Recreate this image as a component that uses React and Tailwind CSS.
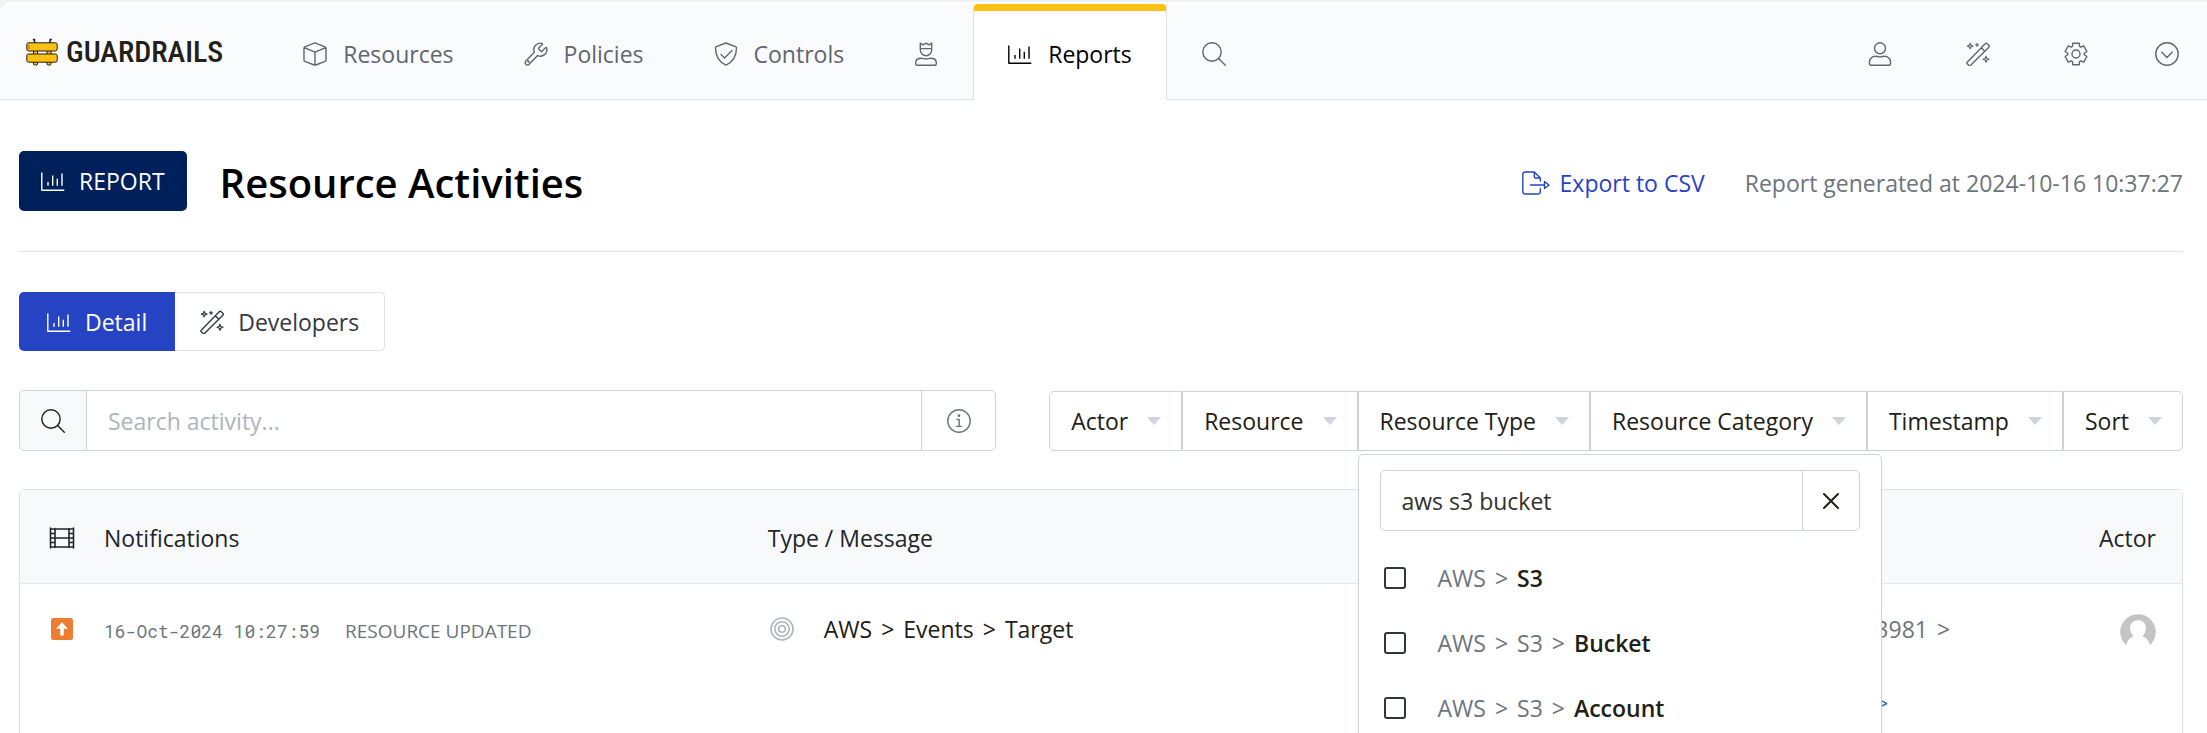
import { Wrench } from "lucide-react";

function Icon({ children, width = 24, className = "", strokeWidth = 1.4 }) {
  return (
    <svg
      width={width}
      height="24"
      viewBox={`0 0 ${width} 24`}
      fill="none"
      stroke="currentColor"
      strokeWidth={strokeWidth}
      strokeLinecap="round"
      strokeLinejoin="round"
      className={`shrink-0 ${className}`}
      aria-hidden="true"
    >
      {children}
    </svg>
  );
}

const CubeIcon = () => (
  <Icon>
    <path d="M11.2 1.1 1.9 4.8A1.4 1.4 0 0 0 1 6v12a1.4 1.4 0 0 0 .9 1.3l9.3 3.7q.8.3 1.6 0l9.3-3.7A1.4 1.4 0 0 0 23 18V6a1.4 1.4 0 0 0-.9-1.2L12.800 1.100q-.8-.3-1.600 0zM1.300 5.600 12 10.200l10.700-4.600M12 10.200V23" />
  </Icon>
);

const WrenchIcon = () => (
  <Wrench className="-m-px size-[26px] shrink-0" strokeWidth={1.3} aria-hidden="true">
    <circle cx="5" cy="19" r=".5" />
  </Wrench>
);

const ShieldIcon = () => (
  <Icon>
    <path d="M12 1 2.300 4.700a1.200 1.200 0 0 0-.8 1.100C1.500 13 4.600 19.800 12 23.200c7.400-3.400 10.500-10.200 10.500-17.400a1.200 1.200 0 0 0-.8-1.100zM7 12.500l3.500 3.500L18 8.500" />
  </Icon>
);

const RulerIcon = () => (
  <Icon>
    <path d="M6.300 1.200 9 2.900l3-1.700 3 1.700 2.700-1.700V8a5.700 5.700 0 0 1-11.400 0zM6.300 6.600h11.400" />
    <path d="M7.500 16.300c1.500 0 2.500.7 4.500.7s3-.7 4.500-.7c3.500 0 5.800 1.900 5.800 4.700v.8a1.500 1.500 0 0 1-1.500 1.500H3.200a1.500 1.500 0 0 1-1.500-1.500V21c0-2.800 2.300-4.700 5.800-4.700z" />
  </Icon>
);

const ChartIcon = () => (
  <Icon>
    <path d="M.8 3.500v17.700h22.500M7 13v3.800M11.700 6.500v10.300M16.300 9.800v7M21 4.500v12.300" strokeLinecap="butt" />
  </Icon>
);

const SearchIcon = () => (
  <Icon>
    <circle cx="10" cy="10" r="9.200" />
    <path d="M16.600 16.600 23.300 23.300" />
  </Icon>
);

const UserIcon = () => (
  <Icon>
    <circle cx="12" cy="6.300" r="5.500" />
    <path d="M7.500 14.200c1.500 0 2.500.7 4.500.7s3-.7 4.500-.7c3.500 0 6 2.600 6 5.800v1.800a1.500 1.500 0 0 1-1.500 1.500H3a1.500 1.500 0 0 1-1.500-1.500V20c0-3.200 2.500-5.800 6-5.800z" />
  </Icon>
);

const WandIcon = () => (
  <Icon>
    <path d="M1.200 20.200 19.200 1.700q1-1 2 0l1.600 1.600q1 1 0 2L4.700 23.300q-.9.800-1.800 0l-1.700-1.600q-.8-.8 0-1.500zM15.300 5.700l3.500 3.500" />
    <path d="M4.200 1.300l.8 2 2 .8-2 .8-.8 2-.8-2-2-.8 2-.8zM20 14.300l.8 2.200 2.200.8-2.200.8-.8 2.200-.8-2.200-2.200-.8 2.200-.8zM11 1.300v3M9.500 2.800h3" strokeWidth="1.200" />
  </Icon>
);

const gearPoints = [0, 60, 120, 180, 240, 300]
  .flatMap((turn) => [[-25, 8.300], [-17, 11.200], [17, 11.200], [25, 8.300]].map(([angle, radius]) => {
    const t = ((turn + angle) * Math.PI) / 180;
    return `${(12 + radius * Math.sin(t)).toFixed(2)},${(12 - radius * Math.cos(t)).toFixed(2)}`;
  }))
  .join(" ");

const GearIcon = () => (
  <Icon>
    <polygon points={gearPoints} />
    <circle cx="12" cy="12" r="4" />
  </Icon>
);

const CircleDownIcon = () => (
  <Icon>
    <circle cx="12" cy="12" r="11.200" />
    <path d="M6.800 10.200 12 15.400l5.200-5.200" />
  </Icon>
);

const ExportIcon = () => (
  <Icon width={28}>
    <path d="M18.300 10V7L12.300 1H3a2.200 2.200 0 0 0-2.200 2.200v17.600A2.200 2.200 0 0 0 3 23h13a2.200 2.200 0 0 0 2.300-2.200v-3M12.300 1v5a1 1 0 0 0 1 1h5M8.500 14H22.500M22.500 10.500v7L27 14z" />
  </Icon>
);

const InfoIcon = () => (
  <Icon>
    <circle cx="12" cy="12" r="11.200" />
    <path d="M10 10.500h2.200v6.700M9.500 17.400h5" />
    <circle cx="12" cy="6.700" r=".7" fill="currentColor" />
  </Icon>
);

const FilmIcon = () => (
  <Icon className="-mx-px" width={26} strokeWidth={1.6}>
    <path d="M1.500 2v20M24.500 2v20M6 2.500v19M20 2.500v19M1.500 3H24.500M6 12h14M1.500 21H24.500M1.500 7.500H6M1.500 12H6M1.500 16.500H6M20 7.500h4.500M20 12h4.500M20 16.500h4.500" />
  </Icon>
);

const TargetIcon = () => (
  <Icon className="text-[#adb5bd]" strokeWidth={1.6}>
    <circle cx="12" cy="12" r="11" />
    <circle cx="12" cy="12" r="7.200" />
    <circle cx="12" cy="12" r="3.300" />
  </Icon>
);

const UpdatedIcon = () => (
  <svg width="22" height="22" viewBox="0 0 22 22" className="ml-px" role="img" aria-label="Updated">
    <rect width="22" height="22" rx="2.500" fill="#ed7d31" />
    <path d="M11 4.200 17 10.700H12.800V17.500H9.200V10.700H5z" fill="#fff" />
  </svg>
);

const Avatar = () => (
  <svg width="36" height="36" viewBox="0 0 36 36" role="img" aria-label="Actor avatar">
    <circle cx="18" cy="18" r="17.800" fill="#c4c4c4" />
    <path d="M18 6.300c4.800 0 8 3.500 8 7.900 0 3-1.200 5.600-3 7.200v1.200c3.500 1.300 5.500 4 7 8.400V36H6v-5c1.500-4.400 3.500-7.100 7-8.400v-1.200c-1.800-1.600-3-4.200-3-7.200 0-4.400 3.200-7.900 8-7.900z" fill="#fff" />
  </svg>
);

const LogoMark = () => (
  <svg width="32" height="28" viewBox="0 0 32 28" aria-hidden="true">
    <g stroke="#222018" strokeWidth="1" fill="#fdc116">
      <path d="M9 5 8 1.500M6.800 1.500h2.400M23.500 5l1-3.500M23.500 1.500h2.400" fill="none" strokeWidth="1.500" />
      <rect x="7.500" y="12" width="4" height="15" rx="1" />
      <rect x="21" y="12" width="4" height="15" rx="1" />
      <rect x=".8" y="4.800" width="30.400" height="8.200" rx="1.800" />
      <rect x=".8" y="16" width="30.400" height="8.200" rx="1.800" />
    </g>
    <path d="M3 7.500v3" stroke="#222018" strokeDasharray="1 1" />
  </svg>
);

const navItem = "flex items-center gap-4 px-[35px] pt-1 text-[#5f676f]";
const filters = ["Actor", "Resource", "Resource Type", "Resource Category", "Timestamp", "Sort"];
const options = [["AWS", "S3"], ["AWS", "S3", "Bucket"], ["AWS", "S3", "Account"]];

function Crumbs({ parts, boldLast }) {
  return (
    <span className="flex items-center gap-[9px]">
      {parts.map((part, i) => (
        <span key={part} className="flex items-center gap-[9px]">
          {i > 0 && <span>&gt;</span>}
          <span className={boldLast && i === parts.length - 1 ? "font-semibold text-[#212016]" : ""}>{part}</span>
        </span>
      ))}
    </span>
  );
}

function TypeMenu() {
  return (
    <div className="absolute top-full -left-px z-10 mt-1 w-[524px] rounded-[5px] border border-[#ced4da] bg-white px-[21px] pt-[15px] pb-4">
      <div className="flex h-[61px] rounded-[5px] border border-[#ced4da]">
        <input
          type="text"
          aria-label="Filter resource types"
          defaultValue="aws s3 bucket"
          className="min-w-0 flex-1 rounded-l-[5px] bg-transparent pl-[21px] text-[#33322a] outline-none"
        />
        <button type="button" aria-label="Clear" className="flex w-[57px] items-center justify-center border-l border-[#ced4da] text-[#212016]">
          <Icon strokeWidth={2}>
            <path d="M5 5l14 14M19 5 5 19" />
          </Icon>
        </button>
      </div>
      <ul className="pt-[14px]">
        {options.map((parts) => (
          <li key={parts.join()}>
            <label className="flex h-[65px] items-center gap-8 pl-1 text-[#6c757d]">
              <input type="checkbox" className="size-[22px] appearance-none rounded-[3px] border-2 border-[#33363a] checked:bg-[#2643c4]" />
              <Crumbs parts={parts} boldLast />
            </label>
          </li>
        ))}
      </ul>
    </div>
  );
}

export default function App() {
  return (
    <div className="flex min-h-screen flex-col overflow-hidden bg-[#f1f1f1] pt-[2px] font-['Open_Sans',sans-serif] text-[23px] leading-[34px] text-[#212529]">
      <div className="flex flex-1 flex-col rounded-tl-xl bg-white pt-[2px]">
        <nav className="flex h-[96px] items-stretch rounded-tl-lg border-b border-[#dee2e6] bg-[#fafbfd]">
          <a href="#home" className="mr-[45px] flex items-center gap-2 pl-[26px] font-['Roboto_Condensed','Liberation_Sans',sans-serif] text-[30px] font-medium text-[#222018]">
            <LogoMark />
            GUARDRAILS
          </a>
          <a href="#resources" className={navItem}><CubeIcon />Resources</a>
          <a href="#policies" className={navItem}><WrenchIcon />Policies</a>
          <a href="#controls" className={navItem}><ShieldIcon />Controls</a>
          <a href="#directory" aria-label="Directory" className={navItem}><RulerIcon /></a>
          <a href="#reports" className="-mb-px flex items-center gap-4 rounded-t-[5px] border-x border-t-[7px] border-x-[#dee2e6] border-t-[#fdc116] bg-white px-[34px] pb-[3px] text-black">
            <ChartIcon />Reports
          </a>
          <a href="#search" aria-label="Search" className={navItem}><SearchIcon /></a>
          <div className="ml-auto flex">
            <button type="button" aria-label="Profile" className="px-[37px] pt-1 text-[#5f676f]"><UserIcon /></button>
            <button type="button" aria-label="Developer tools" className="px-[37px] pt-1 text-[#5f676f]"><WandIcon /></button>
            <button type="button" aria-label="Settings" className="px-[37px] pt-1 text-[#5f676f]"><GearIcon /></button>
            <button type="button" aria-label="More" className="pt-1 pr-7 pl-[30px] text-[#5f676f]"><CircleDownIcon /></button>
          </div>
        </nav>

        <main className="flex flex-1 flex-col pr-6 pl-[19px]">
          <header className="flex items-center border-b border-[#dee2e6] pt-[50px] pb-[35px]">
            <div className="pt-px pb-[5px]">
              <div className="flex h-[60px] items-center gap-[14px] rounded-[5px] bg-[#00205b] px-[22px] text-white">
                <ChartIcon />REPORT
              </div>
            </div>
            <h1 className="ml-[33px] text-[40px] font-semibold text-black">Resource Activities</h1>
            <a href="#export" className="ml-auto flex items-center gap-[10px] text-[#2643c4]"><ExportIcon />Export to CSV</a>
            <p className="ml-10 text-[#6c757d]">Report generated at 2024-10-16 10:37:27</p>
          </header>

          <div className="mt-10 flex h-[59px]">
            <button type="button" className="flex items-center gap-[14px] rounded-l-[5px] bg-[#2643c4] px-7 text-white"><ChartIcon />Detail</button>
            <button type="button" className="flex items-center gap-[14px] rounded-r-[5px] border border-l-0 border-[#dee2e6] px-[25px] text-[#343a40]"><WandIcon />Developers</button>
          </div>

          <div className="mt-[39px] flex items-end gap-[53px]">
            <div className="flex h-[61px] flex-1 rounded-[5px] border border-[#ced4da]">
              <label htmlFor="search" aria-label="Search activity" className="flex w-[67px] items-center justify-center rounded-l-[5px] border-r border-[#ced4da] bg-[#f8f9fb] text-[#212016]"><SearchIcon /></label>
              <input id="search" type="text" placeholder="Search activity..." className="min-w-0 flex-1 pl-[21px] outline-none placeholder:text-[#adb5bd]" />
              <button type="button" aria-label="Search help" className="flex w-[74px] items-center justify-center border-l border-[#ced4da] text-[#6c757d]"><InfoIcon /></button>
            </div>
            <div className="flex h-[60px]">
              {filters.map((name) => (
                <div key={name} className="relative border border-[#ced4da] first:rounded-l-[5px] last:rounded-r-[5px]">
                  <button type="button" className="flex h-full items-center gap-[19px] pr-5 pl-[21px] text-[#212016]">
                    {name}
                    <svg width="14" height="8" viewBox="0 0 14 8" aria-hidden="true"><path d="M0 0h14L7 8z" fill="#ced4da" /></svg>
                  </button>
                  {name === "Resource Type" && <TypeMenu />}
                </div>
              ))}
            </div>
          </div>

          <div className="mt-[38px] flex-1 rounded-t-[5px] border border-b-0 border-[#dee2e6]">
            <table className="w-full table-fixed">
              <colgroup>
                <col className="w-[84px]" />
                <col className="w-[30.7%]" />
                <col />
                <col className="w-[10.3%]" />
                <col className="w-[90px]" />
              </colgroup>
              <thead>
                <tr className="h-[93px] border-b border-[#e4e8ec] bg-[#f8f9fb] text-left">
                  <th className="pt-[3px] pl-[30px]"><FilmIcon /></th>
                  <th className="pt-[3px] font-normal">Notifications</th>
                  <th className="pt-[3px] font-normal">Type / Message</th>
                  <th aria-label="Resource" />
                  <th className="pt-[3px] pr-[26px] text-right font-normal">Actor</th>
                </tr>
              </thead>
              <tbody>
                <tr className="align-top">
                  <td className="pt-[34px] pl-[30px]"><UpdatedIcon /></td>
                  <td className="pt-7">
                    <div className="flex items-center gap-[25px] pt-[2px] text-[#6c757d]">
                      <time className="font-['Roboto_Mono','Liberation_Mono',monospace] text-lg">16-Oct-2024 10:27:59</time>
                      <span className="text-[19px]">RESOURCE UPDATED</span>
                    </div>
                  </td>
                  <td className="pt-7">
                    <div className="flex items-center gap-[30px] pl-[2px] text-[#212016]">
                      <TargetIcon />
                      <Crumbs parts={["AWS", "Events", "Target"]} />
                    </div>
                  </td>
                  <td className="pt-7 pl-[6px] text-[#6c757d]">
                    <p className="flex gap-[9px]">3981 <span>&gt;</span></p>
                    <p className="mt-10 text-[#4a6a8a]">&gt;</p>
                  </td>
                  <td className="pt-[30px] pr-[26px]"><div className="flex justify-end"><Avatar /></div></td>
                </tr>
              </tbody>
            </table>
          </div>
        </main>
      </div>
    </div>
  );
}
